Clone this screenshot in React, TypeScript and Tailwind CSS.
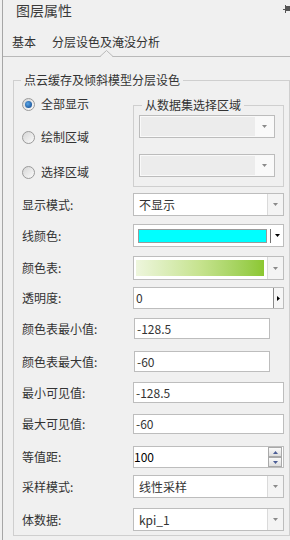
import React from "react";

const font = "font-['Noto_Sans_CJK_SC','Noto_Sans',sans-serif]";

function Arrow({ dark }: { dark?: boolean }) {
  return (
    <svg width="5" height="3" viewBox="0 0 5 3">
      <path d="M0 0h5L2.5 3z" fill={dark ? "#000" : "#8a8a8a"} />
    </svg>
  );
}

function Radio({ checked }: { checked?: boolean }) {
  return (
    <span className="w-[13px] h-[13px] rounded-full border border-[#9a9a9a] bg-gradient-to-br from-[#d6d6d6] to-[#fbfbfb] flex items-center justify-center shrink-0">
      {checked && (
        <span className="w-[7px] h-[7px] rounded-full bg-[radial-gradient(circle_at_40%_40%,#5aa6e6,#0a3f86)]" />
      )}
    </span>
  );
}

function DisabledCombo() {
  return (
    <div className="w-[136px] h-[23px] border border-[#bcbcbc] bg-[#f9f9f9] flex items-center p-[1px]">
      <div className="w-[114px] h-[19px] bg-[#ececec]" />
      <div className="flex-1 flex items-center justify-center">
        <Arrow />
      </div>
    </div>
  );
}

function Select({ text, h }: { text: string; h: string }) {
  return (
    <div className={`w-[151px] ${h} border border-[#bdbdbd] bg-white flex`}>
      <div className="flex-1 pl-[5px] flex items-center leading-[16px]">{text}</div>
      <div className="w-[16px] border-l border-[#dadada] bg-[#f4f4f4] flex items-center justify-center">
        <Arrow />
      </div>
    </div>
  );
}

function TextBox({ text, w, h, ml }: { text: string; w: string; h: string; ml?: string }) {
  return (
    <div className={`${w} ${h} ${ml ?? ""} border border-[#bdbdbd] bg-white flex items-center pl-[2px] leading-[16px]`}>
      {text}
    </div>
  );
}

function Row({ label, mt, children }: { label: string; mt: string; children: React.ReactNode }) {
  return (
    <div className={`flex items-center ${mt}`}>
      <div className="w-[119px] pl-[8px] leading-[16px] text-[#333]">{label}</div>
      {children}
    </div>
  );
}

function SpinBtn({ up }: { up?: boolean }) {
  return (
    <div className="h-[10px] border border-[#a9a9a9] bg-gradient-to-b from-[#fafafa] to-[#dedede] flex items-center justify-center">
      <svg width="5" height="3" viewBox="0 0 5 3">
        <path d={up ? "M0 3h5L2.5 0z" : "M0 0h5L2.5 3z"} fill="#4b5d96" />
      </svg>
    </div>
  );
}

export default function App() {
  return (
    <div className={`w-[290px] h-[540px] bg-[#f0f0f0] overflow-hidden text-[12px] text-[#333] ${font}`}>
      <div className="ml-[2px] h-full border-l border-[#a6a6a6] flex flex-col">
        <div className="h-[20px] flex items-start justify-between">
          <span className="pl-[13px] text-[14px] leading-[20px] text-[#3a3a3a]">图层属性</span>
          <svg className="mt-[5px]" width="7" height="9" viewBox="0 0 7 9">
            <rect x="0" y="4" width="2" height="1" fill="#555" />
            <rect x="2" y="0" width="1" height="8" fill="#555" />
            <rect x="3" y="1" width="4" height="5" fill="#555" />
          </svg>
        </div>

        <div className="relative h-[37px] border-b border-[#b9b9b9] flex items-start pt-[14px] pl-[9px] gap-[16px] leading-[16px]">
          <span>基本</span>
          <span>分层设色及淹没分析</span>
          <svg className="absolute left-[97px] bottom-[-1px]" width="13" height="7" viewBox="0 0 13 7">
            <rect x="0.5" y="0" width="12" height="7" fill="#f0f0f0" />
            <polyline points="0,6.5 6.5,0.5 13,6.5" fill="none" stroke="#b9b9b9" strokeWidth="1" />
          </svg>
        </div>

        <fieldset className="ml-[10px] mt-[15px] w-[277px] border border-[#cfcfcf] p-0 pb-[4px]">
          <legend className="ml-[7px] px-[3px] leading-[16px]">点云缓存及倾斜模型分层设色</legend>

          <div className="flex">
            <div className="w-[119px] pl-[8px] pt-[8px] flex flex-col">
              <div className="h-[16px] flex items-center gap-[6px]">
                <Radio checked />
                <span className="leading-[16px]">全部显示</span>
              </div>
              <div className="h-[16px] mt-[17px] flex items-center gap-[6px]">
                <Radio />
                <span className="leading-[16px]">绘制区域</span>
              </div>
              <div className="h-[16px] mt-[19px] flex items-center gap-[6px]">
                <Radio />
                <span className="leading-[16px]">选择区域</span>
              </div>
            </div>
            <fieldset className="mt-[9px] w-[151px] border border-[#cfcfcf] p-0 pl-[5px] pt-[2px] pb-[9px]">
              <legend className="ml-[3px] px-[3px] leading-[16px]">从数据集选择区域</legend>
              <DisabledCombo />
              <div className="mt-[16px]">
                <DisabledCombo />
              </div>
            </fieldset>
          </div>

          <Row label="显示模式:" mt="mt-[6px]">
            <Select text="不显示" h="h-[23px]" />
          </Row>

          <Row label="线颜色:" mt="mt-[8px]">
            <div className="w-[151px] h-[23px] border border-[#bdbdbd] bg-white flex items-center pl-[4px]">
              <div className="w-[129px] h-[14px] border border-[#9a9a9a] bg-[#00ffff]" />
              <div className="ml-[3px] w-[1px] h-[14px] bg-[#707070]" />
              <div className="flex-1 flex items-center justify-center">
                <Arrow dark />
              </div>
            </div>
          </Row>

          <Row label="颜色表:" mt="mt-[9px]">
            <div className="w-[151px] h-[24px] border border-[#bdbdbd] bg-white flex items-center pl-[2px]">
              <div className="w-[128px] h-[16px] bg-gradient-to-r from-[#eef6dd] via-[#c6e38e] to-[#8cc730]" />
              <div className="flex-1" />
              <div className="w-[16px] h-full border-l border-[#dadada] bg-[#f4f4f4] flex items-center justify-center">
                <Arrow />
              </div>
            </div>
          </Row>

          <Row label="透明度:" mt="mt-[7px]">
            <div className="w-[151px] h-[22px] border border-[#bdbdbd] bg-white flex">
              <div className="flex-1 pl-[2px] flex items-center leading-[16px]">0</div>
              <div className="w-[10px] border-l border-[#8a8a8a] bg-[#f6f6f6] flex items-center justify-center">
                <svg width="3" height="5" viewBox="0 0 3 5">
                  <path d="M0 0v5l3-2.5z" fill="#000" />
                </svg>
              </div>
            </div>
          </Row>

          <Row label="颜色表最小值:" mt="mt-[9px]">
            <TextBox text="-128.5" w="w-[136px]" h="h-[21px]" ml="ml-[1px]" />
          </Row>

          <Row label="颜色表最大值:" mt="mt-[12px]">
            <TextBox text="-60" w="w-[136px]" h="h-[21px]" ml="ml-[1px]" />
          </Row>

          <Row label="最小可见值:" mt="mt-[10px]">
            <TextBox text="-128.5" w="w-[151px]" h="h-[21px]" />
          </Row>

          <Row label="最大可见值:" mt="mt-[11px]">
            <TextBox text="-60" w="w-[151px]" h="h-[20px]" />
          </Row>

          <Row label="等值距:" mt="mt-[12px]">
            <div className="w-[151px] h-[22px] border border-[#bdbdbd] bg-white flex items-center">
              <div className="flex-1 leading-[16px] text-black">100</div>
              <div className="w-[14px] mr-[1px] flex flex-col">
                <SpinBtn up />
                <SpinBtn />
              </div>
            </div>
          </Row>

          <Row label="采样模式:" mt="mt-[7px]">
            <Select text="线性采样" h="h-[23px]" />
          </Row>

          <Row label="体数据:" mt="mt-[10px]">
            <Select text="kpi_1" h="h-[23px]" />
          </Row>
        </fieldset>
      </div>
    </div>
  );
}
